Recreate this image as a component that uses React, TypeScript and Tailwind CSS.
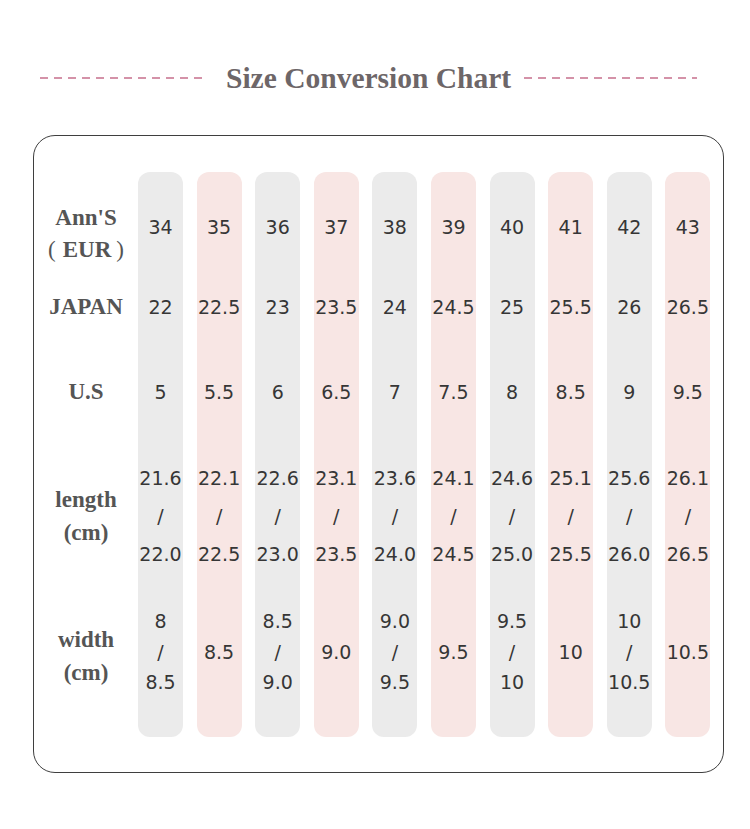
import React from "react";

type Cell = string | [string, string];

type SizeCol = {
  eur: string;
  japan: string;
  us: string;
  length: [string, string];
  width: Cell;
};

const cols: SizeCol[] = [
  { eur: "34", japan: "22", us: "5", length: ["21.6", "22.0"], width: ["8", "8.5"] },
  { eur: "35", japan: "22.5", us: "5.5", length: ["22.1", "22.5"], width: "8.5" },
  { eur: "36", japan: "23", us: "6", length: ["22.6", "23.0"], width: ["8.5", "9.0"] },
  { eur: "37", japan: "23.5", us: "6.5", length: ["23.1", "23.5"], width: "9.0" },
  { eur: "38", japan: "24", us: "7", length: ["23.6", "24.0"], width: ["9.0", "9.5"] },
  { eur: "39", japan: "24.5", us: "7.5", length: ["24.1", "24.5"], width: "9.5" },
  { eur: "40", japan: "25", us: "8", length: ["24.6", "25.0"], width: ["9.5", "10"] },
  { eur: "41", japan: "25.5", us: "8.5", length: ["25.1", "25.5"], width: "10" },
  { eur: "42", japan: "26", us: "9", length: ["25.6", "26.0"], width: ["10", "10.5"] },
  { eur: "43", japan: "26.5", us: "9.5", length: ["26.1", "26.5"], width: "10.5" },
];

const label = "font-['Liberation_Serif',serif] font-bold text-[23px] text-[#555]";

function Dashes({ w }: { w: string }) {
  return (
    <div
      className={`${w} h-[2px] bg-[repeating-linear-gradient(90deg,#d492a8_0px,#d492a8_8px,transparent_8px,transparent_14px)]`}
    />
  );
}

function Pill({ col, pink }: { col: SizeCol; pink: boolean }) {
  return (
    <div
      className={`w-[45px] flex flex-col items-center rounded-[12px] pb-[13px] ${
        pink ? "bg-[#f8e6e4]" : "bg-[#ebebeb]"
      }`}
    >
      <div className="h-[110px] flex items-center">{col.eur}</div>
      <div className="h-[50px] flex items-center">{col.japan}</div>
      <div className="h-[120px] flex items-center">{col.us}</div>
      <div className="h-[128px] flex flex-col items-center justify-center leading-[38px]">
        <span>{col.length[0]}</span>
        <span>/</span>
        <span>{col.length[1]}</span>
      </div>
      <div className="h-[144px] flex flex-col items-center justify-center leading-[30.5px]">
        {Array.isArray(col.width) ? (
          <>
            <span>{col.width[0]}</span>
            <span>/</span>
            <span>{col.width[1]}</span>
          </>
        ) : (
          <span>{col.width}</span>
        )}
      </div>
    </div>
  );
}

export default function App() {
  return (
    <div className="w-[750px] h-[829px] bg-white pt-[60px]">
      {/* title */}
      <div className="h-[36px] flex items-center pl-[40px]">
        <Dashes w="w-[168px]" />
        <h1 className="ml-[18px] mr-[13px] font-['Liberation_Serif',serif] font-bold text-[29.5px] leading-[36px] text-[#6d6668] whitespace-nowrap">
          Size Conversion Chart
        </h1>
        <Dashes w="w-[173px]" />
      </div>

      {/* chart */}
      <div className="ml-[33px] mt-[39px] w-[691px] h-[638px] border border-[#3f3f3f] rounded-[22px] pt-[36px] flex">
        <div className="w-[104px] flex flex-col items-center text-center">
          <div className={`h-[110px] pt-[14px] flex flex-col items-center justify-center leading-[32px] ${label}`}>
            <span>Ann'S</span>
            <span className="flex">
              <span className="font-normal mr-[7px]">(</span>
              EUR
              <span className="font-normal ml-[5px]">)</span>
            </span>
          </div>
          <div className={`h-[50px] flex items-center ${label}`}>JAPAN</div>
          <div className={`h-[120px] flex items-center ${label}`}>U.S</div>
          <div className={`h-[128px] flex flex-col justify-center leading-[33px] ${label}`}>
            <span>length</span>
            <span>(cm)</span>
          </div>
          <div className={`h-[144px] pt-[7px] flex flex-col justify-center leading-[33px] ${label}`}>
            <span>width</span>
            <span>(cm)</span>
          </div>
        </div>
        <div className="flex gap-x-[13.6px] font-['DejaVu_Sans',sans-serif] text-[19px] text-[#363636] self-start">
          {cols.map((c, i) => (
            <Pill key={c.eur} col={c} pink={i % 2 === 1} />
          ))}
        </div>
      </div>
    </div>
  );
}
